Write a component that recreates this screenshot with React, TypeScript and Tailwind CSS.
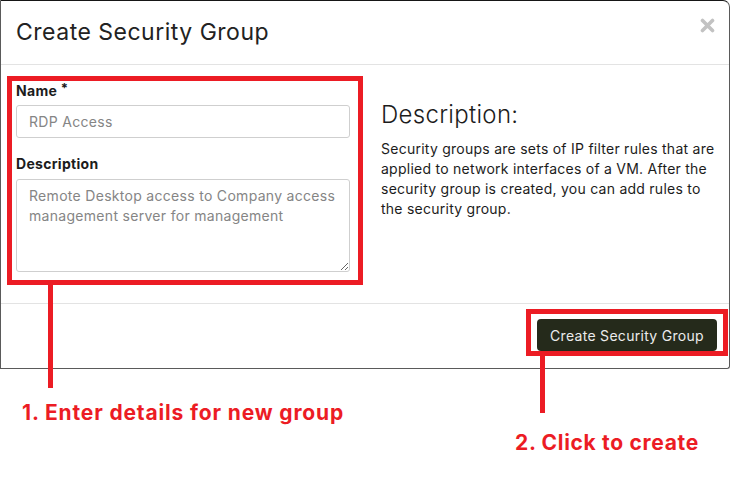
import React from "react";

const font = { fontFamily: "Inter, 'Open Sans', sans-serif" };

function CloseIcon() {
  return (
    <svg width="15" height="15" viewBox="0 0 15 15" className="block">
      <path d="M2.5 2.5 L12.5 12.5 M12.5 2.5 L2.5 12.5" stroke="#c2c2c2" strokeWidth="3.6" strokeLinecap="round" />
    </svg>
  );
}

export default function App() {
  return (
    <div className="relative w-[732px] h-[500px] bg-white overflow-hidden" style={font}>
      {/* modal */}
      <div className="w-[730px] h-[369px] bg-white border border-[#5a5a5a] border-t-[#161616] rounded-tr-[7px] rounded-br-[3px] flex flex-col">
        <div className="h-[64px] shrink-0 flex items-center justify-between pl-[15px] pr-[14px] border-b border-[#e3e3e3]">
          <h1 className="text-[23px] font-normal text-[#222] tracking-[0.5px]">Create Security Group</h1>
          <div className="self-start mt-[17px]">
            <CloseIcon />
          </div>
        </div>

        <div className="flex h-[239px] border-b border-[#e3e3e3]">
          {/* form, outlined for the tutorial */}
          <div className="ml-[6px] mt-[11px] w-[356px] h-[209px] border-[5px] border-[#ec1c24] pl-1 pr-2">
            <label className="block text-[14px] leading-5 font-bold text-[#1c1c1c] tracking-[0.3px]">
              Name <sup className="text-[13px] relative -top-[3px]">*</sup>
            </label>
            <input
              className="mt-1 block w-[334px] h-[33px] rounded-[3px] border border-[#cfcfcf] px-3 text-[14px] tracking-[0.3px] placeholder:text-[#858585] outline-none"
              placeholder="RDP Access"
              readOnly
            />
            <label className="block mt-4 text-[14px] leading-5 font-bold text-[#1c1c1c] tracking-[0.3px]">Description</label>
            <textarea
              className="mt-[5px] block w-[334px] h-[93px] rounded-[3px] border border-[#cfcfcf] px-3 pt-[6px] text-[14px] leading-5 tracking-[0.3px] placeholder:text-[#858585] outline-none"
              placeholder="Remote Desktop access to Company access management server for management"
              readOnly
            />
          </div>

          <div className="ml-[18px] pt-[34px] w-[338px]">
            <h2 className="text-[24px] leading-8 font-light text-[#1c1c1c] tracking-[0.3px]">Description:</h2>
            <p className="mt-[8px] text-[14px] leading-5 text-[#1c1c1c] tracking-[0.25px]">
              Security groups are sets of IP filter rules that are applied to network interfaces of a VM. After the
              security group is created, you can add rules to the security group.
            </p>
          </div>
        </div>

        <div className="flex justify-end pr-[1px]">
          <div className="mt-[5px] border-[5px] border-[#ec1c24] pt-[5px] px-[6px]">
            <button className="h-[32px] px-[13px] rounded-[4px] bg-[#252a1b] text-[14px] tracking-[0.3px] text-[#ececec]">
              Create Security Group
            </button>
          </div>
        </div>
      </div>

      {/* annotation leaders and captions */}
      <div className="absolute left-[48px] top-[285px] w-[5px] h-[103px] bg-[#ec1c24]" />
      <div className="absolute left-[540px] top-[355px] w-[5px] h-[58px] bg-[#ec1c24]" />
      <p className="absolute left-[22px] top-[397px] text-[21px] font-bold tracking-[0.85px] text-[#ec1c24]">
        1. Enter details for new group
      </p>
      <p className="absolute left-[515px] top-[427px] text-[21px] font-bold tracking-[0.68px] text-[#ec1c24]">
        2. Click to create
      </p>
    </div>
  );
}
